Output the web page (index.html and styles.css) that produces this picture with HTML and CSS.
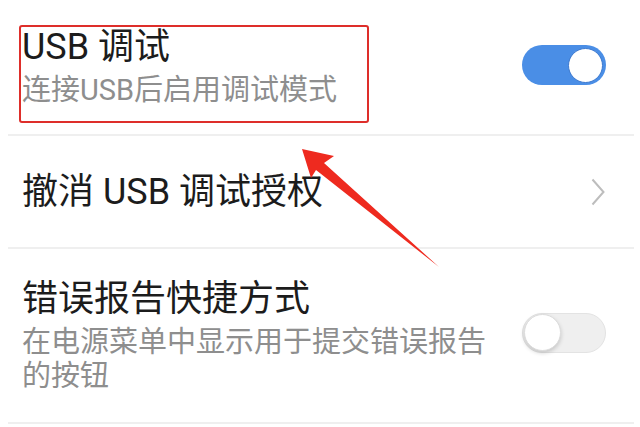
FILE: index.html
```html
<!DOCTYPE html>
<html lang="zh-CN">
<head>
<meta charset="utf-8">
<title>开发者选项</title>
<link rel="stylesheet" href="styles.css">
</head>
<body>
<div class="screen">
  <div class="list">
    <div class="row row-usb">
      <div class="text">
        <div class="title">USB 调试</div>
        <div class="sub">连接USB后启用调试模式</div>
      </div>
      <span class="switch on"><span class="knob"></span></span>
    </div>
    <div class="row row-revoke">
      <div class="text">
        <div class="title">撤消 USB 调试授权</div>
      </div>
      <svg class="chevron" width="14" height="28" viewBox="0 0 14 28"><path d="M1.5 1.5 L12.5 14 L1.5 26.5" fill="none" stroke="#bdbdbd" stroke-width="2"/></svg>
    </div>
    <div class="row row-bug">
      <div class="text">
        <div class="title">错误报告快捷方式</div>
        <div class="sub">在电源菜单中显示用于提交错误报告的按钮</div>
      </div>
      <span class="switch off"><span class="knob"></span></span>
    </div>
  </div>
  <div class="highlight"></div>
  <svg class="arrow" width="640" height="427" viewBox="0 0 640 427">
    <polygon points="302,149 334,156 324,163 439,267 316,170 311,178" fill="#ee2a1f"/>
  </svg>
</div>
</body>
</html>
```

FILE: styles.css
```css
* { box-sizing: border-box; }
html, body {
  margin: 0;
  padding: 0;
  background: #ffffff;
}
body {
  font-family: Roboto, "Noto Sans CJK SC", "Noto Sans", sans-serif;
  width: 640px;
  height: 427px;
  overflow: hidden;
}
.screen {
  position: relative;
  width: 640px;
  height: 427px;
}
.list {
  display: flex;
  flex-direction: column;
  margin: 0 6px 0 8px;
}
.row {
  display: flex;
  align-items: center;
  padding: 0 28px 0 14px;
  border-bottom: 2px solid #efefef;
}
.row-usb { height: 136px; }
.row-revoke { height: 113px; }
.row-bug { height: 175px; }
.text {
  flex: 1;
  min-width: 0;
  display: flex;
  flex-direction: column;
}
.title {
  font-size: 36px;
  line-height: 40px;
  color: #1c1c1c;
}
.sub {
  font-size: 29px;
  line-height: 34px;
  color: #8e8e8e;
  margin-top: 6px;
}
.switch {
  flex: none;
  width: 84px;
  height: 40px;
  border-radius: 20px;
  display: flex;
  align-items: center;
  margin-left: 30px;
}
.switch.on {
  background: #4a8ee6;
  justify-content: flex-end;
  padding: 0 3px;
  margin-bottom: 4px;
}
.switch.on .knob {
  width: 35px;
  height: 35px;
  border-radius: 50%;
  background: #ffffff;
  border: 1.5px solid #3c79cf;
}
.switch.off {
  background: #efefef;
  border: 1px solid #e3e3e3;
  justify-content: flex-start;
  padding: 0 1px;
  margin-bottom: 6px;
}
.switch.off .knob {
  width: 37px;
  height: 37px;
  border-radius: 50%;
  background: #ffffff;
  border: 1px solid #dcdcdc;
  box-shadow: 0 2px 4px rgba(0, 0, 0, 0.18);
}
.chevron {
  flex: none;
  margin-left: 30px;
  margin-right: 1px;
}
.highlight {
  position: absolute;
  left: 19px;
  top: 25px;
  width: 350px;
  height: 98px;
  border: 2.5px solid #de2e2a;
  border-radius: 3px;
}
.arrow {
  position: absolute;
  left: 0;
  top: 0;
}
```
